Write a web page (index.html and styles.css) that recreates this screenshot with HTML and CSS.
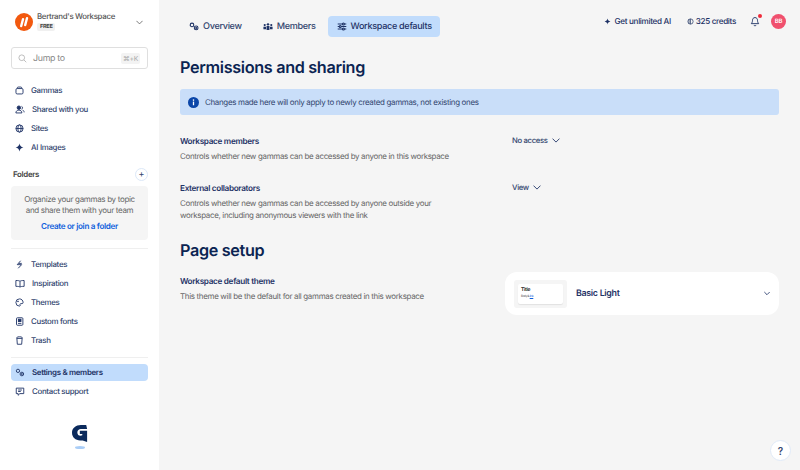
FILE: index.html
```html
<!DOCTYPE html>
<html lang="en">
<head>
<meta charset="utf-8">
<title>Workspace defaults</title>
<link rel="stylesheet" href="styles.css">
</head>
<body>
<div class="app">
  <aside class="sidebar">
    <div class="workspace">
      <svg class="ws-logo" viewBox="0 0 18 18"><circle cx="9" cy="9" r="9" fill="#f2590f"/><path d="M6.200 13 8 6.200M10.200 12 12 5.200" stroke="#fff" stroke-width="2.400" stroke-linecap="round" fill="none"/></svg>
      <div class="ws-text">
        <div class="ws-name">Bertrand's Workspace</div>
        <span class="ws-badge">FREE</span>
      </div>
      <svg class="chev ws-chev" viewBox="0 0 10 6"><path d="M1 1l4 4 4-4"/></svg>
    </div>
    <div class="search">
      <svg class="search-icon" viewBox="0 0 12 12"><circle cx="5" cy="5" r="3.800"/><path d="M8 8l3 3"/></svg>
      <span class="search-text">Jump to</span>
      <span class="kbd">⌘+K</span>
    </div>
    <nav class="nav nav-top">
      <a class="item"><svg class="ico" viewBox="0 0 12 12"><rect x="1.300" y="3.400" width="9.400" height="7.200" rx="1.600"/><path d="M3 3.400V2.600c0-.7.5-1.200 1.200-1.200h3.600c.7 0 1.200.5 1.200 1.200v.8"/></svg>Gammas</a>
      <a class="item shift"><svg class="ico wide" viewBox="0 0 13 12"><circle cx="5" cy="3.600" r="2.300" fill="#1f3366"/><path d="M1 10.600c0-2.400 1.800-3.800 4-3.800s4 1.400 4 3.800z"/><path d="M8.500 1.800a2 2 0 0 1 0 3.800M10 6.800c1.300.5 2 1.600 2 3"/></svg>Shared with you</a>
      <a class="item"><svg class="ico" viewBox="0 0 12 12"><circle cx="6" cy="6" r="4.800"/><ellipse cx="6" cy="6" rx="2.200" ry="4.800"/><path d="M1.200 6h9.600"/></svg>Sites</a>
      <a class="item"><svg class="ico solid" viewBox="0 0 12 12"><path d="M6 .8c.6 3 1.900 4.500 5.200 5.200C7.900 6.700 6.600 8.200 6 11.200 5.400 8.200 4.100 6.700.8 6 4.100 5.300 5.400 3.800 6 .8z"/></svg>AI Images</a>
    </nav>
    <div class="folders-head">
      <span>Folders</span>
      <button class="plus" type="button">+</button>
    </div>
    <div class="folder-box">
      <p>Organize your gammas by topic and share them with your team</p>
      <a class="folder-link">Create or join a folder</a>
    </div>
    <hr class="rule rule-a">
    <nav class="nav">
      <a class="item"><svg class="ico" viewBox="0 0 12 12"><path d="M7.500 1 3 6.200h5.800L4.300 11M5 4.500h4"/></svg>Templates</a>
      <a class="item"><svg class="ico wide" viewBox="0 0 13 12"><path d="M6.500 3C5.500 2.200 3.800 2 1 2v7.800c2.800 0 4.500.2 5.500 1 1-.8 2.700-1 5.500-1V2c-2.800 0-4.500.2-5.500 1zM6.500 3v7.800"/></svg>Inspiration</a>
      <a class="item"><svg class="ico" viewBox="0 0 12 12"><path d="M6 1.200a4.800 4.800 0 1 0 0 9.600c1 0 1.200-.9.800-1.500-.5-.9 0-1.800 1-1.800h1.500c.9 0 1.500-.6 1.500-1.600C10.800 3.200 8.600 1.200 6 1.200z"/><circle cx="4" cy="4.500" r=".6"/></svg>Themes</a>
      <a class="item"><svg class="ico" viewBox="0 0 12 12"><rect x="2" y="1" width="8.500" height="10" rx="1.200"/><rect x="4.500" y="3" width="3.500" height="3" fill="#1f3366"/><path d="M4 8.500h4.500"/></svg>Custom fonts</a>
      <a class="item"><svg class="ico" viewBox="0 0 12 12"><path d="M2.500 3.200h7l-.6 7.800H3.100zM2 3.200c0-1.300 1-2.200 4-2.200s4 .9 4 2.200"/></svg>Trash</a>
    </nav>
    <hr class="rule rule-b">
    <nav class="nav">
      <a class="item active"><svg class="ico wide" viewBox="0 0 13 12"><circle cx="3.800" cy="3.800" r="2.200"/><circle cx="9" cy="8" r="2.400"/><circle cx="9" cy="8" r=".7"/></svg>Settings &amp; members</a>
      <a class="item"><svg class="ico wide" viewBox="0 0 13 12"><path d="M1.500 1.500h10v7.300H6.300L4 11V8.800H1.500z"/><path d="M4 4h5M4 6h3.500"/></svg>Contact support</a>
    </nav>
    <div class="brand">
      <svg class="brand-g" viewBox="0 0 18 20"><path d="M10 .5h6l1 4.500H10C7.800 5 6 6.600 6 8.800s1.500 3.700 3.500 3.700c.8 0 1.500-.1 2.100-.4v-1.500H8.800V7h8.200v12.500l-5-1.500c-.8-.1-1.700-.2-2.700-.2C4 17.800 0 14.300 0 9.200 0 4 4.300.5 10 .5z"/></svg>
      <span class="brand-shadow"></span>
    </div>
  </aside>

  <main class="main">
    <header class="topbar">
      <div class="tabs">
        <a class="tab"><svg class="tab-ico" viewBox="0 0 14 12"><circle cx="4.200" cy="3.800" r="2.500"/><circle cx="10" cy="8" r="2.600"/><circle cx="10" cy="8" r=".7"/></svg>Overview</a>
        <a class="tab"><svg class="tab-ico solid" viewBox="0 0 14 12"><circle cx="2.400" cy="4" r="1.500"/><circle cx="7" cy="3" r="1.700"/><circle cx="11.600" cy="4" r="1.500"/><path d="M.6 6.200h3.600v3.600H.6zM5 5.400h4v5.400H5zM9.800 6.200h3.600v3.600H9.800z"/></svg>Members</a>
        <a class="tab tab-active"><svg class="tab-ico" viewBox="0 0 14 12"><path d="M1 2.500h12M1 6h12M1 9.500h12"/><circle cx="9" cy="2.500" r="1.400" fill="#c7dffb"/><circle cx="4.500" cy="6" r="1.400" fill="#c7dffb"/><circle cx="9" cy="9.500" r="1.400" fill="#c7dffb"/></svg>Workspace defaults</a>
      </div>
      <div class="actions">
        <a class="action"><svg class="act-ico solid" viewBox="0 0 12 12"><path d="M6 1c.5 2.900 1.800 4.300 5 5-3.200.7-4.500 2.100-5 5-.5-2.900-1.800-4.300-5-5 3.200-.7 4.500-2.100 5-5z"/></svg>Get unlimited AI</a>
        <a class="action action-credits"><svg class="act-ico" viewBox="0 0 12 12"><circle cx="6" cy="6" r="4.500"/><path d="M3.500 1.800v8.400M6 1.500v9"/></svg>325 credits</a>
        <span class="bell"><svg viewBox="0 0 14 14"><path d="M7 1.500c-2.300 0-3.500 1.700-3.500 3.800 0 2.300-.7 3.500-1.700 4.700h10.400c-1-1.200-1.700-2.400-1.700-4.700 0-2.100-1.200-3.800-3.500-3.800zM5.500 12c.3.800.8 1.100 1.500 1.100s1.200-.3 1.500-1.100"/></svg><i class="dot"></i></span>
        <span class="avatar">BB</span>
      </div>
    </header>

    <h1 class="title">Permissions and sharing</h1>
    <div class="banner">
      <svg class="info" viewBox="0 0 12 12"><circle cx="6" cy="6" r="6" fill="#0b46a8"/><rect x="5.300" y="5" width="1.400" height="4" fill="#fff"/><circle cx="6" cy="3.400" r=".9" fill="#fff"/></svg>
      Changes made here will only apply to newly created gammas, not existing ones
    </div>

    <section class="row row-one">
      <div class="row-text">
        <h3>Workspace members</h3>
        <p>Controls whether new gammas can be accessed by anyone in this workspace</p>
      </div>
      <div class="select">No access <svg class="chev" viewBox="0 0 10 6"><path d="M1 1l4 4 4-4"/></svg></div>
    </section>
    <section class="row row-two">
      <div class="row-text">
        <h3>External collaborators</h3>
        <p>Controls whether new gammas can be accessed by anyone outside your workspace, including anonymous viewers with the link</p>
      </div>
      <div class="select">View <svg class="chev" viewBox="0 0 10 6"><path d="M1 1l4 4 4-4"/></svg></div>
    </section>

    <h2 class="title title-two">Page setup</h2>
    <section class="row row-three">
      <div class="row-text">
        <h3>Workspace default theme</h3>
        <p>This theme will be the default for all gammas created in this workspace</p>
      </div>
      <div class="theme-card">
        <div class="thumb">
          <div class="thumb-inner">
            <span class="thumb-title">Title</span>
            <span class="thumb-body">Body &amp; <u>link</u></span>
          </div>
        </div>
        <span class="theme-name">Basic Light</span>
        <svg class="chev theme-chev" viewBox="0 0 10 6"><path d="M1 1l4 4 4-4"/></svg>
      </div>
    </section>
  </main>
</div>
<button class="help" type="button">?</button>
</body>
</html>
```

FILE: styles.css
```css
* { box-sizing: border-box; }
html, body { margin: 0; height: 100%; overflow: hidden; }
body { font-family: Inter, "Liberation Sans", sans-serif; letter-spacing: -.02em; color: #1f3366; background: #f5f5f5; text-rendering: geometricPrecision; }
svg { display: block; flex: none; }
a { color: inherit; text-decoration: none; }

.app { display: flex; height: 470px; }

.sidebar {
  width: 159px; flex: none; height: 470px; background: #fff;
  padding: 0 11px; display: flex; flex-direction: column;
}
.workspace { display: flex; align-items: center; height: 44px; padding-left: 4px; }
.ws-logo { width: 18px; height: 18px; }
.ws-text { margin-left: 4px; flex: 1; min-width: 0; padding-bottom: 2px; }
.ws-name { font-size: 7.900px; line-height: 11px; font-weight: 500; color: #555; white-space: nowrap; }
.ws-badge {
  display: block; width: fit-content; font-size: 5.600px; font-weight: 700; line-height: 8px; color: #444;
  background: #f0f0f0; border-radius: 2px; padding: 0 3px; margin-top: 1px;
}
.chev { width: 8px; height: 5px; fill: none; stroke: #1f3366; stroke-width: 1.100; stroke-linecap: round; stroke-linejoin: round; }
.ws-chev { stroke: #555; margin-right: 5px; width: 7px; }

.search {
  margin-top: 3px; height: 22px; display: flex; align-items: center; padding: 1px 7px 0 6px;
  border: 1px solid #dfdfdf; border-radius: 3px; background: #fff;
}
.search-icon { width: 9px; height: 9px; fill: none; stroke: #aaa; stroke-width: 1; }
.search-text { margin-left: 6px; flex: 1; font-size: 8.850px; color: #888; }
.kbd { font-size: 6.800px; color: #aaa; background: #f3f3f3; border-radius: 2px; padding: 1px 2px; }

.nav { display: flex; flex-direction: column; }
.nav-top { margin-top: 12px; }
.item {
  height: 19px; display: flex; align-items: center; gap: 7px; padding: 0 0 1px 4px;
  font-size: 7.900px; font-weight: 500; color: #33466f; white-space: nowrap;
}
.ico { width: 9px; height: 9px; fill: none; stroke: #1f3366; stroke-width: 1.200; }
.ico.wide { width: 10px; }
.ico.solid { fill: #1f3366; stroke: none; }
.item.active { background: #c1dcfc; border-radius: 4px; height: 17px; margin: 1px 0; color: #1f3366; font-weight: 600; }

.folders-head {
  margin-top: 7px; height: 20px; display: flex; align-items: center; justify-content: space-between;
  padding-left: 2px; font-size: 7.900px; font-weight: 600; color: #444;
}
.plus {
  width: 13px; height: 13px; padding: 0; border-radius: 50%; border: 1px solid #dce8f8; background: #fff;
  color: #33466f; font-size: 9px; line-height: 10px; font-family: inherit;
}
.folder-box {
  margin-top: 2px; height: 54px; background: #f5f5f5; border-radius: 4px; padding: 8px 8px 0;
  text-align: center; font-size: 8px; line-height: 11px; color: #666;
}
.folder-box p { margin: 0 0 5px; }
.folder-link { color: #0f5fdc; font-weight: 600; font-size: 8.100px; }
.rule { border: 0; height: 1px; background: #efefef; margin: 0; }
.rule-a { margin-top: 8px; margin-bottom: 6px; }
.rule-b { margin-top: 7px; margin-bottom: 5px; }

.brand { margin-top: 23px; display: flex; flex-direction: column; align-items: center; }
.brand-g { width: 16px; height: 19px; fill: #0b2a5c; }
.brand-shadow { width: 10px; height: 3px; margin-top: 3px; border-radius: 50%; background: #a9cdf7; }

.main { flex: 1; min-width: 0; padding: 16px 21px 0; }
.topbar { display: flex; justify-content: space-between; align-items: flex-start; height: 21px; }
.tabs { display: flex; gap: 3px; }
.tab {
  height: 21px; display: inline-flex; align-items: center; gap: 4px; padding: 0 9px;
  font-size: 9.100px; font-weight: 500; color: #33466f; border-radius: 4px; white-space: nowrap;
}
.tab-ico { width: 10px; height: 9px; fill: none; stroke: #1f3366; stroke-width: 1.500; }
.tab-ico.solid { fill: #1f3366; stroke: none; }
.tab-active { background: #c1dcfc; color: #1f3366; padding-right: 8px; }
.actions { display: flex; align-items: center; height: 14px; margin-top: -9px; margin-right: -7px; transform: translateY(7px); }
.action { display: inline-flex; align-items: center; gap: 4px; font-size: 8.100px; font-weight: 500; color: #1f3366; white-space: nowrap; margin-right: 16px; }
.action-credits { gap: 2px; margin-right: 14px; }
.act-ico { width: 7px; height: 7px; fill: none; stroke: #33466f; stroke-width: 1.300; }
.act-ico.solid { fill: #1f3366; stroke: none; }
.bell { position: relative; width: 10px; height: 11px; margin-right: 11px; }
.bell svg { width: 10px; height: 11px; fill: none; stroke: #1f3366; stroke-width: 1.300; }
.dot { position: absolute; top: -2px; right: -2px; width: 4px; height: 4px; background: #ef2b3a; border-radius: 50%; }
.avatar {
  width: 15px; height: 15px; border-radius: 50%; background: #f0506e; color: #fff;
  font-size: 6px; font-weight: 600; display: flex; align-items: center; justify-content: center;
}

.title { margin: 0; font-size: 16.200px; line-height: 24px; font-weight: 600; color: #0b2452; }
.topbar + .title { margin-top: 18px; }
.banner {
  margin-top: 10px; height: 26px; border-radius: 3px; background: #c9def9; padding-left: 8px;
  display: flex; align-items: center; gap: 6px; font-size: 7.950px; color: #33466f; white-space: nowrap;
}
.info { width: 11px; height: 11px; }

.row { display: flex; align-items: flex-start; }
.row-text { width: 332px; flex: none; padding-right: 50px; }
.row h3 { margin: 0; font-size: 8.200px; line-height: 13px; font-weight: 600; color: #1f3366; }
.row p { margin: 3px 0 0; font-size: 7.950px; line-height: 11.500px; color: #666; }
.row-one { margin-top: 20px; }
.row-two { margin-top: 19.500px; }
.select { display: inline-flex; align-items: center; gap: 4px; font-size: 7.700px; line-height: 11px; font-weight: 500; color: #33466f; }
.select .chev { width: 8px; }

.title-two { margin-top: 17px; }
.row-three { margin-top: 10px; }
.row-three .row-text { width: 325px; padding-top: 3px; }
.theme-card {
  flex: 1; height: 43px; background: #fff; border-radius: 12px;
  display: flex; align-items: center; padding: 0 9px 0 9px;
}
.thumb { width: 53px; height: 28px; background: #f5f5f5; border-radius: 3px; padding: 4px; }
.thumb-inner { height: 20px; background: #fff; border-radius: 2px; padding: 3px; display: flex; flex-direction: column; box-shadow: 0 1px 1px rgba(0,0,0,.08); }
.thumb-title { font-size: 5px; line-height: 7px; font-weight: 600; color: #111; }
.thumb-body { font-size: 3px; line-height: 5px; color: #444; }
.thumb-body u { color: #0f5fdc; }
.theme-name { margin-left: 9px; flex: 1; font-size: 8.900px; font-weight: 600; color: #1f3366; }
.theme-chev { width: 6px; stroke-width: 1.400; }

.help {
  position: fixed; left: 770px; top: 440px; width: 21px; height: 21px; padding: 0; border-radius: 50%;
  background: #fff; border: 1px solid #dfe9f7; color: #33466f; font: 600 10px/1 Inter, sans-serif;
}
```
